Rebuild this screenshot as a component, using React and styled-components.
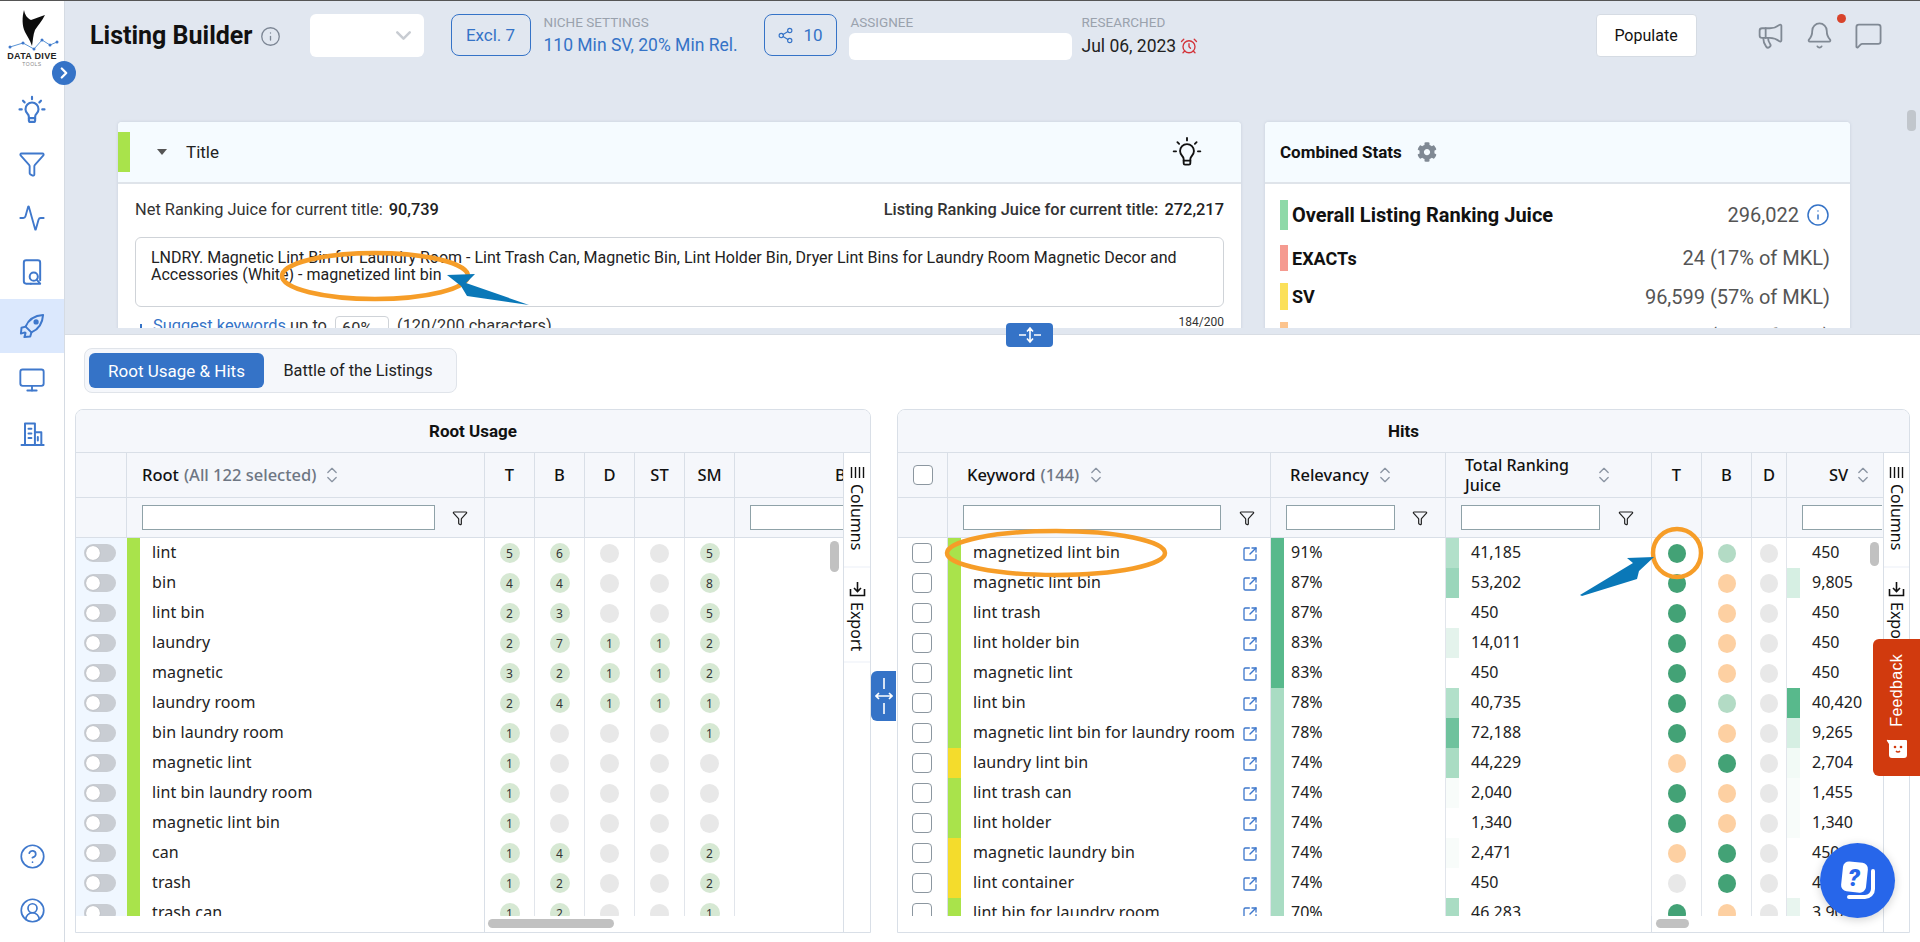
import React from 'react';
import styled, { createGlobalStyle } from 'styled-components';
import { Funnel, Activity, Monitor, CircleHelp, CircleUserRound, Megaphone, Bell, MessageSquare, Share2, AlarmClock, Info, SquareArrowOutUpRight, ChevronDown, ChevronRight, ChevronsUpDown } from 'lucide-react';
import { FaCog } from 'react-icons/fa';

const Global = createGlobalStyle`
  html, body { margin: 0; padding: 0; height: 100%; overflow: hidden; }
  body { font-family: Roboto, "Liberation Sans", sans-serif; color: #111; background: #fff; }
  * { box-sizing: border-box; }
`;

const tableFont = '"Noto Sans", Roboto, sans-serif';

const Shell = styled.div`
  position: relative; display: flex; width: 1920px; height: 942px; overflow: hidden;
  border-top: 1px solid #555;
`;
const Sidebar = styled.nav`
  position: relative; width: 65px; flex: none; background: #fff; border-right: 1px solid #d5dbe3;
  display: flex; flex-direction: column; align-items: stretch;
`;
const LogoBlock = styled.div`
  height: 81px; display: flex; flex-direction: column; align-items: center; padding-top: 8px;
`;
const LogoName = styled.span`
  font: 700 9px/9px "Liberation Sans", sans-serif; color: #222; letter-spacing: .3px; margin-top: -1px; white-space: nowrap;
`;
const LogoSub = styled.span`
  font: 400 5px/6px "Liberation Sans", sans-serif; color: #888; letter-spacing: .5px;
`;
const Collapse = styled.div`
  position: absolute; left: 52px; top: 60px; width: 24px; height: 24px; border-radius: 50%;
  background: #3573c7; color: #fff; display: flex; align-items: center; justify-content: center; z-index: 3;
`;
const NavItem = styled.div`
  height: ${p => p.$h || 54}px; display: flex; align-items: center; justify-content: center; color: #3f78cc;
  background: ${p => p.$active ? '#dbe8fd' : 'transparent'};
`;
const NavSpacer = styled.div`flex: 1;`;

const Main = styled.div`
  flex: 1; min-width: 0; display: flex; flex-direction: column; background: #e1e7f0;
`;
const Upper = styled.div`
  height: 327px; flex: none; overflow: hidden; display: flex; flex-direction: column;
`;
const TopBar = styled.header`
  height: 121px; flex: none; display: flex; align-items: flex-start; padding: 13px 0 0 25px;
`;
const PageTitle = styled.h1`
  margin: 0; font: 700 25px/44px Roboto, sans-serif; color: #111; white-space: nowrap;
`;
const TitleInfo = styled.span`
  margin-left: 7px; height: 44px; display: flex; align-items: center; color: #7c8694;
`;
const SelectBox = styled.div`
  margin-left: 29px; width: 114px; height: 43px; background: #fff; border-radius: 6px;
  display: flex; align-items: center; justify-content: flex-end; padding-right: 8px; color: #c8ccd2;
`;
const OutlineBtn = styled.div`
  margin-left: ${p => p.$ml}px; width: ${p => p.$w}px; height: 42px; border: 1px solid #3573c7; border-radius: 8px;
  display: flex; align-items: center; justify-content: center; gap: 9px; color: #3573c7; font-size: 17px;
`;
const Meta = styled.div`
  margin-left: ${p => p.$ml}px; width: ${p => p.$w}px; display: flex; flex-direction: column;
`;
const MetaLabel = styled.span`
  font-size: 13.5px; line-height: 16px; color: #9aa2ad; white-space: nowrap; margin-left: ${p => p.$ml || 0}px;
`;
const MetaBlue = styled.span`
  font-size: 17.5px; line-height: 20px; margin-top: 5px; color: #3573c7; white-space: nowrap;
`;
const MetaDate = styled.span`
  font-size: 17.5px; line-height: 20px; margin-top: 6px; color: #222; white-space: nowrap; display: flex; align-items: center; gap: 4px;
`;
const AssigneeInput = styled.div`
  width: 223px; height: 27px; background: #fff; border-radius: 6px; margin-top: 3px;
`;
const PopulateBtn = styled.div`
  margin-left: 364px; width: 101px; height: 43px; background: #fff; border: 1px solid #d5dbe3; border-radius: 4px;
  display: flex; align-items: center; justify-content: center; font-size: 16px; color: #111;
`;
const HeaderIcons = styled.div`
  margin-left: 59px; width: 128px; height: 43px; display: flex; align-items: center; gap: 20px; color: #808994; position: relative;
`;
const RedDot = styled.span`
  position: absolute; left: 81px; top: 0; width: 9px; height: 9px; border-radius: 50%; background: #d8432b;
`;
const CardsRow = styled.div`
  display: flex; gap: 24px; padding-left: 53px; align-items: flex-start;
`;
const Card = styled.section`
  width: ${p => p.$w}px; flex: none; background: #fff; border-radius: 4px 4px 0 0; height: 260px; overflow: hidden;
  box-shadow: 0 0 3px rgba(120,130,150,.25);
`;
const CardHead = styled.div`
  height: 62px; background: #f5fbff; border-bottom: 2px solid #dfe4ea; display: flex; align-items: center; position: relative;
`;
const ColorTag = styled.span`
  width: 12px; height: 40px; background: #a9e34b; flex: none;
`;
const Caret = styled.span`
  margin-left: 27px; width: 0; height: 0; border-left: 5px solid transparent; border-right: 5px solid transparent; border-top: 6px solid #555;
`;
const CardTitle = styled.span`
  margin-left: 19px; font-size: 17px; color: #222;
`;
const CardTool = styled.span`
  margin-left: auto; margin-right: 38px; display: flex; color: #111;
`;
const CardBody = styled.div`
  padding: 16px 17px 0 17px;
`;
const JuiceLine = styled.div`
  display: flex; justify-content: space-between; font-size: 16.4px; line-height: 20px; color: #333;
`;
const Strong = styled.b`
  font-weight: 500; color: #222; margin-left: ${p => p.$ml || 0}px;
`;
const JuiceRight = styled.span`
  font-weight: 500;
`;
const TitleArea = styled.div`
  margin-top: 17px; height: 70px; border: 1px solid #cfd3d8; border-radius: 6px; padding: 11px 15px; font-size: 16px; line-height: 17px; color: #222;
`;
const SuggestRow = styled.div`
  display: flex; align-items: flex-start; position: relative; font-size: 16.4px; line-height: 20px; margin-top: 9px; color: #333; padding-left: 5px;
`;
const SuggestMark = styled.span`
  width: 2px; height: 14px; background: #3573c7; margin-top: 8px; flex: none;
`;
const SuggestLink = styled.span`color: #3573c7; margin-left: 11px;`;
const PercentBox = styled.span`
  margin: 0 8px 0 4px; width: 54px; height: 26px; border: 1px solid #cfd3d8; border-radius: 4px; padding: 2px 0 0 6px;
`;
const Counter = styled.span`
  position: absolute; right: 0; top: -1px; font-size: 12px; line-height: 14px; color: #333;
`;
const StatsTitle = styled.span`
  margin-left: 15px; font-size: 17px; font-weight: 700; color: #111;
`;
const GearWrap = styled.span`
  margin-left: 15px; display: flex; color: #808994;
`;
const StatsBody = styled.div`
  padding: 16px 20px 0 15px; display: flex; flex-direction: column;
`;
const StatRow = styled.div`
  display: flex; align-items: center; height: ${p => p.$h}px; margin-bottom: ${p => p.$mb}px;
`;
const StatBar = styled.span`
  width: 8px; height: 100%; background: ${p => p.$c}; margin-right: 4px; flex: none;
`;
const StatName = styled.span`
  font-size: ${p => p.$fs}px; font-weight: 700; color: #111;
`;
const StatValue = styled.span`
  margin-left: auto; font-size: ${p => p.$fs}px; color: #555; display: flex; align-items: center; gap: 7px;
`;

const Band = styled.div`height: 6px; flex: none; background: #e1e7f0;`;
const Lower = styled.div`
  flex: 1; min-height: 0; background: #fff; border-top: 1px solid #d8dde4; padding: 13px 0 0 10px; display: flex; flex-direction: column;
`;
const Tabs = styled.div`
  align-self: flex-start; margin-left: 9px; width: 373px; height: 45px; background: #f5f7fb; border: 1px solid #e0e4ea; border-radius: 8px;
  display: flex; align-items: center; padding: 4px;
`;
const Tab = styled.div`
  height: 35px; width: ${p => p.$w}px; border-radius: 6px; display: flex; align-items: center; justify-content: center;
  font-size: ${p => p.$active ? 17 : 16.3}px; background: ${p => p.$active ? '#3573c7' : 'transparent'}; color: ${p => p.$active ? '#fff' : '#222'};
`;
const Tables = styled.div`
  margin-top: 16px; display: flex; align-items: flex-start;
`;
const Panel = styled.section`
  width: ${p => p.$w}px; margin-left: ${p => p.$ml || 0}px; height: 524px; flex: none; display: flex; flex-direction: column;
  border: 1px solid #d9dfe7; border-radius: 8px 8px 0 0; overflow: hidden; position: relative;
`;
const PanelTitle = styled.div`
  height: 43px; flex: none; background: #f5f7fb; border-bottom: 1px solid #d9dfe7; display: flex; align-items: center; justify-content: center;
  font-size: 17px; font-weight: 700; color: #111;
`;
const PanelBody = styled.div`
  flex: 1; min-height: 0; display: flex;
`;
const GridArea = styled.div`
  flex: 1; min-width: 0; display: flex; flex-direction: column; overflow: hidden; position: relative; font-family: ${tableFont};
`;
const Row = styled.div`
  display: grid; grid-template-columns: ${p => p.$cols}; flex: none; height: ${p => p.$h}px;
  ${p => p.$head ? 'background: #f5f7fb; border-bottom: 1px solid #d9dfe7;' : ''}
`;
const HeadCell = styled.div`
  display: flex; align-items: center; justify-content: ${p => p.$center ? 'center' : 'flex-start'}; padding-left: ${p => p.$pl || 0}px;
  border-right: ${p => p.$noline ? '0' : '1px solid #d9dfe7'}; font-size: 16.5px; font-weight: 500; color: #111; line-height: 20px; min-width: 0; white-space: nowrap; overflow: hidden;
`;
const Muted = styled.span`color: #6e7683; margin-left: 5px; font-weight: 500;`;
const Sort = styled.span`
  margin-left: ${p => p.$ml || 6}px; display: flex; color: #8b95a3; flex: none;
`;
const Wrapped = styled.span`
  white-space: normal; width: 120px; font-size: 16px;
`;
const FilterCell = styled.div`
  display: flex; align-items: center; padding-left: ${p => p.$pl || 0}px; border-right: ${p => p.$noline ? '0' : '1px solid #d9dfe7'}; min-width: 0; overflow: hidden;
`;
const FilterInput = styled.div`
  width: ${p => p.$w}px; height: 25px; background: #fff; border: 1px solid #8fa2a8; flex: none;
`;
const FilterIcon = styled.span`
  margin-left: ${p => p.$ml}px; display: flex; color: #222; flex: none;
`;
const BodyRows = styled.div`
  flex: 1; min-height: 0; overflow: hidden;
`;
const FooterBar = styled.div`
  height: 16px; flex: none; display: grid; grid-template-columns: ${p => p.$cols};
`;
const FooterCell = styled.div`
  border-right: 1px solid #d9dfe7; position: relative;
`;
const HThumb = styled.span`
  position: absolute; left: ${p => p.$l}px; top: 3px; width: ${p => p.$w}px; height: 9px; border-radius: 5px; background: #c1c1c1;
`;
const VThumb = styled.span`
  position: absolute; right: ${p => p.$r}px; top: ${p => p.$t}px; width: 9px; height: ${p => p.$h}px; border-radius: 5px; background: #c1c1c1;
`;
const ToggleCell = styled.div`
  background: #f0f7ff; display: flex; align-items: center; padding-left: 8px;
`;
const Track = styled.span`
  width: 32px; height: 18px; border-radius: 9px; background: #c9cdd3; position: relative; display: block;
  &::after { content: ''; position: absolute; left: 2px; top: 2px; width: 14px; height: 14px; border-radius: 50%; background: #fff; box-shadow: 0 0 1px rgba(0,0,0,.3); }
`;
const TagCell = styled.div`
  background: ${p => p.$c}; border-right: ${p => p.$line ? '1px solid #d9dfe7' : 0};
  display: flex; align-items: center; min-width: 0;
`;
const TextCell = styled.div`
  display: flex; align-items: center; padding: 0 0 2px ${p => p.$pl}px; font-size: 16px; letter-spacing: .1px; color: #222; white-space: nowrap; position: relative;
  border-right: ${p => p.$line ? '1px solid #d9dfe7' : 0};
`;
const Center = styled.div`
  display: flex; align-items: center; justify-content: center; border-right: ${p => p.$noline ? 0 : '1px solid #e1e5eb'};
`;
const Badge = styled.span`
  width: ${p => p.$v ? 20 : 19}px; height: ${p => p.$v ? 20 : 19}px; border-radius: 50%; background: ${p => p.$v ? '#d6e8d3' : '#e8e8e8'};
  display: flex; align-items: center; justify-content: center; font-size: 12px; color: #333;
`;
const Dot = styled.span`
  width: 18px; height: 19px; border-radius: 50%; background: ${p => p.$c};
`;
const CheckCell = styled.div`
  display: flex; align-items: center; padding-left: ${p => p.$pl}px; border-right: ${p => p.$noline ? 0 : '1px solid #d9dfe7'};
`;
const Check = styled.span`
  width: 20px; height: 20px; border: 1.5px solid #8c97a0; border-radius: 4px; background: #fff; display: block;
`;
const ExtLink = styled.span`
  position: absolute; right: 12px; top: 8px; display: flex; color: #3f78cc;
`;
const SideTabs = styled.aside`
  width: ${p => p.$w}px; flex: none; background: #f5f7fb; display: flex; flex-direction: column; gap: 2px; border-left: 1px solid #d9dfe7; overflow: hidden;
`;
const SideTab = styled.div`
  height: ${p => p.$h}px; flex: none; background: #fff; display: flex; flex-direction: column; align-items: center; padding-top: 13px; gap: 5px; overflow: hidden;
`;
const SideLabel = styled.span`
  writing-mode: vertical-rl; font: 400 16px/20px ${tableFont}; color: #111;
`;
const SideRest = styled.div`flex: 1; background: #fff;`;
const VSplit = styled.div`
  position: absolute; left: 871px; top: 670px; width: 25px; height: 50px; background: #3573c7; border-radius: 6px 0 0 6px; color: #fff;
  display: flex; align-items: center; justify-content: center; z-index: 4;
`;
const HSplit = styled.div`
  position: absolute; left: 1006px; top: 322px; width: 47px; height: 24px; background: #3573c7; border-radius: 4px; color: #fff;
  display: flex; align-items: center; justify-content: center; z-index: 4;
`;
const PageThumb = styled.span`
  position: absolute; left: 1907px; top: 109px; width: 9px; height: 21px; border-radius: 4px; background: #c1c6cc; z-index: 2;
`;
const Feedback = styled.div`
  position: absolute; right: 0; top: 638px; width: 47px; height: 137px; background: #d13a0e; border-radius: 6px 0 0 6px; color: #fff; z-index: 6;
  display: flex; flex-direction: column; align-items: center; padding-top: 15px; gap: 12px;
`;
const FeedbackLabel = styled.span`
  writing-mode: vertical-rl; transform: rotate(180deg); font: 400 16px/18px "Liberation Sans", sans-serif; letter-spacing: .3px;
`;
const HelpFab = styled.div`
  position: absolute; left: 1820px; top: 842px; width: 75px; height: 75px; border-radius: 50%; background: #2766ea; z-index: 7;
  display: flex; align-items: center; justify-content: center; box-shadow: 0 2px 10px rgba(0,0,0,.18);
`;
const Overlay = styled.svg`
  position: absolute; left: 0; top: -1px; width: 1920px; height: 942px; pointer-events: none; z-index: 5;
`;

const rootRowCols = '51px 13px 345px 50px 50px 50px 50px 50px 108px';
const rootHeadCols = '51px 358px 50px 50px 50px 50px 50px 108px';
const hitCols = '50px 323px 175px 206px 50px 50px 35px 95px';

const rootData = [
  ['lint', 5, 6, 0, 0, 5], ['bin', 4, 4, 0, 0, 8], ['lint bin', 2, 3, 0, 0, 5], ['laundry', 2, 7, 1, 1, 2],
  ['magnetic', 3, 2, 1, 1, 2], ['laundry room', 2, 4, 1, 1, 1], ['bin laundry room', 1, 0, 0, 0, 1], ['magnetic lint', 1, 0, 0, 0, 0],
  ['lint bin laundry room', 1, 0, 0, 0, 0], ['magnetic lint bin', 1, 0, 0, 0, 0], ['can', 1, 4, 0, 0, 2], ['trash', 1, 2, 0, 0, 2], ['trash can', 1, 2, 0, 0, 1],
];

const G = '#43a276', LG = '#b3dbc5', O = '#fdd0a2', N = '#e8e8e8';
const lime = '#a9e34b', yel = '#f4dc2c', rHi = '#58b98c', rLo = '#a9dcc3';
const hits = [
  ['magnetized lint bin', lime, '91%', rHi, '41,185', '#b2e0ca', G, LG, '450', '#fff'],
  ['magnetic lint bin', lime, '87%', rHi, '53,202', '#9ad6bb', G, O, '9,805', '#d6efe3'],
  ['lint trash', lime, '87%', rHi, '450', '#fff', G, O, '450', '#fff'],
  ['lint holder bin', lime, '83%', rHi, '14,011', '#e4f3ec', G, O, '450', '#fff'],
  ['magnetic lint', lime, '83%', rHi, '450', '#fff', G, O, '450', '#fff'],
  ['lint bin', lime, '78%', rLo, '40,735', '#b2e0ca', G, LG, '40,420', rHi],
  ['magnetic lint bin for laundry room', lime, '78%', rLo, '72,188', '#6fc29d', G, O, '9,265', '#d6efe3'],
  ['laundry lint bin', yel, '74%', rLo, '44,229', '#a9dcc3', O, G, '2,704', '#f2faf6'],
  ['lint trash can', lime, '74%', rLo, '2,040', '#f8fcfa', G, O, '1,455', '#f8fcfa'],
  ['lint holder', lime, '74%', rLo, '1,340', '#fff', G, O, '1,340', '#f8fcfa'],
  ['magnetic laundry bin', yel, '74%', rLo, '2,471', '#f8fcfa', O, G, '450', '#fff'],
  ['lint container', yel, '74%', rLo, '450', '#fff', N, G, '450', '#fff'],
  ['lint bin for laundry room', lime, '70%', rLo, '46,283', '#a9dcc3', G, O, '3,905', '#e8f5ef'],
];

const HeatCell = styled.div`
  display: grid; grid-template-columns: 13px 1fr; border-right: ${p => p.$line ? '1px solid #e1e5eb' : 0}; min-width: 0;
`;
const HeatBar = styled.span`background: ${p => p.$c};`;
const HeatText = styled.span`
  display: flex; align-items: center; padding: 0 0 2px ${p => p.$pl}px; font-size: 16px; color: #222;
`;

const SortIcon = ({ ml }) => <Sort $ml={ml}><ChevronsUpDown size={20} strokeWidth={1.6} /></Sort>;
const FilterGlyph = ({ ml }) => <FilterIcon $ml={ml}><Funnel size={16} strokeWidth={1.8} /></FilterIcon>;

const Glyph = ({ size = 28, w = 1.7, children }) => (
  <svg width={size} height={size} viewBox="0 0 24 24" fill="none" stroke="currentColor" strokeWidth={w} strokeLinecap="round" strokeLinejoin="round">{children}</svg>
);
const BulbGlyph = ({ size, w }) => (
  <Glyph size={size} w={w}>
    <path d="M8.4 15a5.2 5.2 0 1 1 7.2 0c-.8.8-1.1 1.5-1.1 2.5v1h-5v-1c0-1-.3-1.7-1.1-2.5Z" />
    <path d="M10 21.5h4M9.5 18.5v2a1 1 0 0 0 1 1h3a1 1 0 0 0 1-1v-2M12 1.5v1.8M4.8 4.6l1.3 1.3M19.2 4.6l-1.3 1.3M2 11.5h1.8M20.2 11.5H22" />
  </Glyph>
);
const DocSearchGlyph = () => (
  <Glyph><path d="M11 22H7a2 2 0 0 1-2-2V4a2 2 0 0 1 2-2h10a2 2 0 0 1 2 2v15" /><circle cx="13.5" cy="16" r="3.5" /><path d="M16 18.5l3 3.5h-8" /></Glyph>
);
const RocketGlyph = () => (
  <Glyph><path d="M21.5 2.5C14 3 9 6.5 6.5 12.5l5 5c6-2.5 9.5-7.5 10-15Z" /><circle cx="15.5" cy="8.5" r="1.4" fill="currentColor" /><path d="M6.5 12.5 3 13.5l-.5 5 3.5-1M11.5 17.5l-1 3.5-5 .5 1-3.5" /></Glyph>
);
const BuildingGlyph = () => (
  <Glyph><path d="M6 21.5V3h8.5v18.5M14.5 10.5H20v11M3 21.5h19M9 7.5h2.5M9 11.5h2.5M9 15.5h2.5M17 14.5v3" /></Glyph>
);

const ColumnsGlyph = () => (
  <svg width="15" height="13" viewBox="0 0 15 13" fill="none" stroke="#111" strokeWidth="1.4"><path d="M1.5 1v11M5.5 1v11M9.5 1v11M13.5 1v11" /></svg>
);
const ExportGlyph = () => (
  <svg width="17" height="16" viewBox="0 0 17 16" fill="none" stroke="#111" strokeWidth="1.6"><path d="M8.5 1v9M5 7l3.5 3.5L12 7M1.5 8v6.5h14V8" /></svg>
);
const SideColumn = ({ w, exportH }) => (
  <SideTabs $w={w}>
    <SideTab $h={113}><ColumnsGlyph /><SideLabel>Columns</SideLabel></SideTab>
    <SideTab $h={exportH}><ExportGlyph /><SideLabel>Export</SideLabel></SideTab>
    <SideRest />
  </SideTabs>
);

const Logo = () => (
  <svg width="56" height="44" viewBox="0 0 56 44">
    <path d="M20 1C21 6 23 9 27 11C32 9 36 8 41 6C38 12 34 16 31 21C29 26 29 31 28 37C26 31 23 27 21 23C18 17 18 8 20 1Z" fill="#0c0c0c" />
    <polyline points="6,38 19,34 30,40 38,31 46,36 53,33" fill="none" stroke="#5b95d6" strokeWidth="1" />
    {[[6, 38], [19, 34], [30, 40], [38, 31], [46, 36], [53, 33]].map(([x, y]) => <circle key={x} cx={x} cy={y} r="1.5" fill="#3f78cc" />)}
  </svg>
);

const App = () => (
  <Shell>
    <Global />
    <Sidebar>
      <LogoBlock><Logo /><LogoName>DATA DIVE</LogoName><LogoSub>TOOLS</LogoSub></LogoBlock>
      <Collapse><ChevronRight size={18} strokeWidth={3} /></Collapse>
      <NavItem $h={55}><BulbGlyph size={30} /></NavItem>
      <NavItem><Funnel size={28} strokeWidth={1.6} /></NavItem>
      <NavItem><Activity size={28} strokeWidth={1.6} /></NavItem>
      <NavItem><DocSearchGlyph /></NavItem>
      <NavItem $active><RocketGlyph /></NavItem>
      <NavItem><Monitor size={28} strokeWidth={1.6} /></NavItem>
      <NavItem><BuildingGlyph /></NavItem>
      <NavSpacer />
      <NavItem><CircleHelp size={27} strokeWidth={1.5} /></NavItem>
      <NavItem><CircleUserRound size={27} strokeWidth={1.5} /></NavItem>
      <NavItem $h={5} />
    </Sidebar>

    <Main>
      <Upper>
        <TopBar>
          <PageTitle>Listing Builder</PageTitle>
          <TitleInfo><Info size={21} strokeWidth={1.5} /></TitleInfo>
          <SelectBox><ChevronDown size={25} strokeWidth={2.4} /></SelectBox>
          <OutlineBtn $ml={27} $w={80}>Excl. 7</OutlineBtn>
          <Meta $ml={13} $w={220}>
            <MetaLabel>NICHE SETTINGS</MetaLabel>
            <MetaBlue>110 Min SV, 20% Min Rel.</MetaBlue>
          </Meta>
          <OutlineBtn $ml={0} $w={73}><Share2 size={17} strokeWidth={1.6} />10</OutlineBtn>
          <Meta $ml={12} $w={233}>
            <MetaLabel $ml={2}>ASSIGNEE</MetaLabel>
            <AssigneeInput />
          </Meta>
          <Meta $ml={0} $w={150}>
            <MetaLabel>RESEARCHED</MetaLabel>
            <MetaDate>Jul 06, 2023<AlarmClock size={18} color="#d3343a" strokeWidth={1.8} /></MetaDate>
          </Meta>
          <PopulateBtn>Populate</PopulateBtn>
          <HeaderIcons>
            <Megaphone size={29} strokeWidth={1.5} />
            <Bell size={29} strokeWidth={1.5} />
            <MessageSquare size={29} strokeWidth={1.5} />
            <RedDot />
          </HeaderIcons>
        </TopBar>
        <CardsRow>
          <Card $w={1123}>
            <CardHead>
              <ColorTag />
              <Caret />
              <CardTitle>Title</CardTitle>
              <CardTool><BulbGlyph size={32} w={1.4} /></CardTool>
            </CardHead>
            <CardBody>
              <JuiceLine>
                <span>Net Ranking Juice for current title:<Strong $ml={6}>90,739</Strong></span>
                <JuiceRight>Listing Ranking Juice for current title:<Strong $ml={6}>272,217</Strong></JuiceRight>
              </JuiceLine>
              <TitleArea>LNDRY. Magnetic Lint Bin for Laundry Room - Lint Trash Can, Magnetic Bin, Lint Holder Bin, Dryer Lint Bins for Laundry Room Magnetic Decor and Accessories (White) - magnetized lint bin</TitleArea>
              <SuggestRow>
                <SuggestMark />
                <SuggestLink>Suggest keywords</SuggestLink>
                <span>&nbsp;up to&nbsp;</span>
                <PercentBox>60%</PercentBox>
                <span>(120/200 characters)</span>
                <Counter>184/200</Counter>
              </SuggestRow>
            </CardBody>
          </Card>
          <Card $w={585}>
            <CardHead>
              <StatsTitle>Combined Stats</StatsTitle>
              <GearWrap><FaCog size={20} /></GearWrap>
            </CardHead>
            <StatsBody>
              <StatRow $h={30} $mb={15}><StatBar $c="#8ed9a8" /><StatName $fs={20}>Overall Listing Ranking Juice</StatName><StatValue $fs={20}>296,022<Info size={24} color="#3573c7" strokeWidth={1.5} /></StatValue></StatRow>
              <StatRow $h={26} $mb={12}><StatBar $c="#f59a90" /><StatName $fs={18}>EXACTs</StatName><StatValue $fs={20}>24 (17% of MKL)</StatValue></StatRow>
              <StatRow $h={27} $mb={12}><StatBar $c="#fbe05a" /><StatName $fs={18}>SV</StatName><StatValue $fs={20}>96,599 (57% of MKL)</StatValue></StatRow>
              <StatRow $h={27} $mb={0}><StatBar $c="#fcc48e" /><StatName $fs={18}>CPR</StatName><StatValue $fs={20}>45 (26% of MKL)</StatValue></StatRow>
            </StatsBody>
          </Card>
        </CardsRow>
      </Upper>
      <Band />
      <Lower>
        <Tabs>
          <Tab $active $w={176}>Root Usage &amp; Hits</Tab>
          <Tab $w={189}>Battle of the Listings</Tab>
        </Tabs>
        <Tables>
          <Panel $w={796}>
            <PanelTitle>Root Usage</PanelTitle>
            <PanelBody>
              <GridArea>
                <Row $head $h={45} $cols={rootHeadCols}>
                  <HeadCell />
                  <HeadCell $pl={15}>Root<Muted>(All 122 selected)</Muted><SortIcon ml={6} /></HeadCell>
                  <HeadCell $center>T</HeadCell>
                  <HeadCell $center>B</HeadCell>
                  <HeadCell $center>D</HeadCell>
                  <HeadCell $center>ST</HeadCell>
                  <HeadCell $center>SM</HeadCell>
                  <HeadCell $noline $pl={100}>B</HeadCell>
                </Row>
                <Row $head $h={40} $cols={rootHeadCols}>
                  <FilterCell />
                  <FilterCell $pl={15}><FilterInput $w={293} /><FilterGlyph ml={17} /></FilterCell>
                  <FilterCell /><FilterCell /><FilterCell /><FilterCell /><FilterCell />
                  <FilterCell $noline $pl={15}><FilterInput $w={160} /></FilterCell>
                </Row>
                <BodyRows>
                  {rootData.map(([name, ...vals]) => (
                    <Row key={name} $h={30} $cols={rootRowCols}>
                      <ToggleCell><Track /></ToggleCell>
                      <TagCell $c={lime} />
                      <TextCell $pl={12} $line>{name}</TextCell>
                      {vals.map((v, i) => <Center key={i}><Badge $v={v}>{v || ''}</Badge></Center>)}
                      <Center $noline />
                    </Row>
                  ))}
                </BodyRows>
                <FooterBar $cols="409px 359px">
                  <FooterCell />
                  <FooterCell><HThumb $l={3} $w={126} /></FooterCell>
                </FooterBar>
                <VThumb $r={4} $t={88} $h={31} />
              </GridArea>
              <SideColumn w={27} exportH={93} />
            </PanelBody>
          </Panel>
          <Panel $w={1013} $ml={26}>
            <PanelTitle>Hits</PanelTitle>
            <PanelBody>
              <GridArea>
                <Row $head $h={45} $cols={hitCols}>
                  <CheckCell $pl={15}><Check /></CheckCell>
                  <HeadCell $pl={19}>Keyword<Muted>(144)</Muted><SortIcon ml={7} /></HeadCell>
                  <HeadCell $pl={19}>Relevancy<SortIcon ml={6} /></HeadCell>
                  <HeadCell $pl={19}><Wrapped>Total Ranking Juice</Wrapped><SortIcon ml={9} /></HeadCell>
                  <HeadCell $center>T</HeadCell>
                  <HeadCell $center>B</HeadCell>
                  <HeadCell $center>D</HeadCell>
                  <HeadCell $noline $pl={42}>SV<SortIcon ml={5} /></HeadCell>
                </Row>
                <Row $head $h={40} $cols={hitCols}>
                  <FilterCell />
                  <FilterCell $pl={15}><FilterInput $w={258} /><FilterGlyph ml={18} /></FilterCell>
                  <FilterCell $pl={15}><FilterInput $w={109} /><FilterGlyph ml={17} /></FilterCell>
                  <FilterCell $pl={15}><FilterInput $w={139} /><FilterGlyph ml={18} /></FilterCell>
                  <FilterCell /><FilterCell /><FilterCell />
                  <FilterCell $noline $pl={15}><FilterInput $w={100} /></FilterCell>
                </Row>
                <BodyRows>
                  {hits.map(([kw, tag, rel, relC, trj, trjC, t, b, sv, svC]) => (
                    <Row key={kw} $h={30} $cols={hitCols}>
                      <CheckCell $pl={14}><Check /></CheckCell>
                      <HeatCell $line>
                        <HeatBar $c={tag} />
                        <TextCell $pl={12}>{kw}<ExtLink><SquareArrowOutUpRight size={16} strokeWidth={2} /></ExtLink></TextCell>
                      </HeatCell>
                      <HeatCell $line><HeatBar $c={relC} /><HeatText $pl={7}>{rel}</HeatText></HeatCell>
                      <HeatCell $line><HeatBar $c={trjC} /><HeatText $pl={12}>{trj}</HeatText></HeatCell>
                      <Center><Dot $c={t} /></Center>
                      <Center><Dot $c={b} /></Center>
                      <Center><Dot $c={N} /></Center>
                      <HeatCell><HeatBar $c={svC} /><HeatText $pl={12}>{sv}</HeatText></HeatCell>
                    </Row>
                  ))}
                </BodyRows>
                <FooterBar $cols="754px 233px">
                  <FooterCell />
                  <FooterCell><HThumb $l={4} $w={33} /></FooterCell>
                </FooterBar>
                <VThumb $r={4} $t={89} $h={24} />
              </GridArea>
              <SideColumn w={26} exportH={130} />
            </PanelBody>
          </Panel>
        </Tables>
      </Lower>
    </Main>

    <PageThumb />
    <HSplit>
      <svg width="28" height="16" viewBox="0 0 28 16" fill="none" stroke="#fff" strokeWidth="1.6"><path d="M14 1v14M11 4.5L14 1l3 3.5M11 11.5l3 3.5 3-3.5M3 8h7M18 8h7" /></svg>
    </HSplit>
    <VSplit>
      <svg width="18" height="40" viewBox="0 0 18 40" fill="none" stroke="#fff" strokeWidth="1.6"><path d="M9 2v11M9 27v11M1 20h16M4 17l-3 3 3 3M14 17l3 3-3 3" /></svg>
    </VSplit>
    <Feedback>
      <FeedbackLabel>Feedback</FeedbackLabel>
      <svg width="22" height="20" viewBox="0 0 22 20"><path d="M2 1h18a1 1 0 0 1 1 1v14a3 3 0 0 1-3 3H6a3 3 0 0 1-3-3V5L1 2a.7.7 0 0 1 1-1Z" fill="#fff" /><circle cx="9" cy="8" r="1.3" fill="#d13a0e" /><circle cx="15" cy="8" r="1.3" fill="#d13a0e" /><path d="M10 12c1 1.4 3 1.4 4 0" stroke="#d13a0e" strokeWidth="1.4" fill="none" /></svg>
    </Feedback>
    <HelpFab>
      <svg width="42" height="44" viewBox="0 0 42 44">
        <path d="M36 12v18a8 8 0 0 1-8 8H12" fill="none" stroke="#fff" strokeWidth="4" strokeLinecap="round" />
        <rect x="5" y="3" width="25" height="30" rx="6" fill="#fff" transform="rotate(6 17 18)" />
        <text x="17" y="27" textAnchor="middle" fontFamily="Roboto, sans-serif" fontWeight="900" fontStyle="italic" fontSize="24" fill="#2766ea">?</text>
      </svg>
    </HelpFab>
    <Overlay viewBox="0 0 1920 942">
      <g fill="none" stroke="#f69d28" strokeWidth="4.5">
        <ellipse cx="375" cy="276" rx="93" ry="23" />
        <ellipse cx="1056" cy="553" rx="109" ry="22" />
        <circle cx="1677" cy="553" r="24" />
      </g>
      <g fill="#0a78b8">
        <polygon points="447,275 475,274 466,283 529,305 467,296 461,286" />
        <polygon points="1654,557 1627,558 1633,563 1580,595 1582,596 1637,579 1639,571" />
      </g>
    </Overlay>
  </Shell>
);

export default App;
